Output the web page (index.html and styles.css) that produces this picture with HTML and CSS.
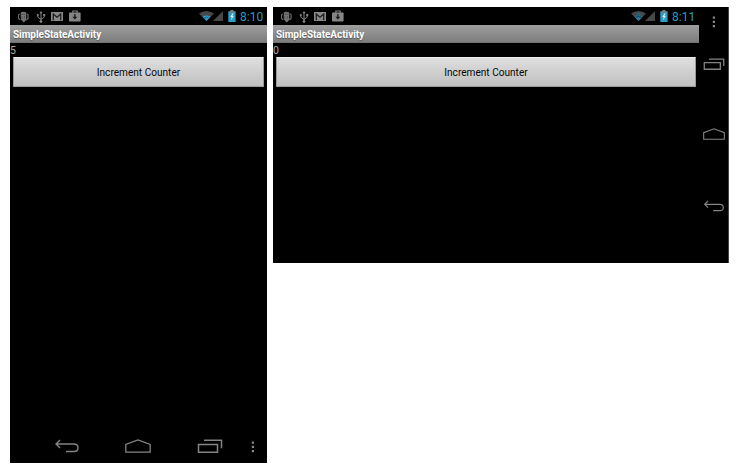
FILE: index.html
```html
<!DOCTYPE html>
<html lang="en">
<head>
<meta charset="utf-8">
<title>SimpleStateActivity</title>
<link rel="stylesheet" href="styles.css">
</head>
<body>
<svg class="defs" width="0" height="0">
  <symbol id="debug" viewBox="0 0 12 12"><path d="M3 1.2Q6-.6 9 1.2V8Q9 9 8 10.4L6.2 12 5 10.6 3.4 9 3 7z" fill="#747474"/><path d="M1.8 2.5L.5 4v3.5l2 1.5M9.5 2.5L11 3.5V7.5L9 9.3" fill="none" stroke="#6c6c6c" stroke-width="1.3"/><path d="M3.5 3h5M4.2 5v3M7 5v3" stroke="#444" stroke-width=".7"/></symbol>
  <symbol id="usb" viewBox="0 0 10 12"><path d="M5 1v10M1.8 4v2.2L5 8.4 8.2 6.2V4" fill="none" stroke="#858585" stroke-width="1"/><path d="M5 0l1.6 2.2H3.4z" fill="#858585"/><circle cx="1.8" cy="4" r="1.1" fill="#858585"/><path d="M7.2 3h2v2h-2z" fill="#858585"/><circle cx="5" cy="10.6" r="1.3" fill="#858585"/></symbol>
  <symbol id="mail" viewBox="0 0 12 9"><path d="M0 0h12v9H0z" fill="#888"/><path d="M2.3 8.2V2L6 5.1 9.7 2v6.2" fill="none" stroke="#181818" stroke-width="1.2"/></symbol>
  <symbol id="bag" viewBox="0 0 12 12"><path d="M3.8 3V1h4.4v2" fill="none" stroke="#858585" stroke-width="1.1"/><rect y="2.5" width="11.6" height="9" rx=".8" fill="#858585"/><path d="M5.2 4h1.3v2.7h1.8L5.85 9.4 3.4 6.7h1.8z" fill="#181818"/></symbol>
  <symbol id="signal" viewBox="0 0 10 10"><path d="M10 0v10H0z" fill="#484848"/></symbol>
  <symbol id="battery" viewBox="0 0 8 12"><path d="M2.4 0h3v1.2h2.2v2H.3v-2h2.1z" fill="#75838a"/><path d="M.3 2.6h7.3V12H.3z" fill="#2e9bc4"/><path d="M4.5 3.4L2.3 7h1.5L3 10.2 5.8 6H4.3l1.2-2.6z" fill="#e8fbff"/></symbol>
  <symbol id="back" viewBox="0 0 26 14"><path d="M6 1L2 5l4 4M2 5h18q4 0 4 3.8T20 12.5h-8" fill="none" stroke="#848484" stroke-width="1.4"/></symbol>
  <symbol id="home" viewBox="0 0 26 14"><path d="M.8 13.2V5.4L13 .9l12.2 4.5v7.8z" fill="none" stroke="#848484" stroke-width="1.3"/></symbol>
  <symbol id="recent" viewBox="0 0 26 14"><path d="M1.5 5.5h19v7.7h-19zM7 1.3h17.5v8" fill="none" stroke="#848484" stroke-width="1.5"/></symbol>
  <symbol id="more" viewBox="0 0 4 12"><path d="M.8.5h2.2v2.2H.8zM.8 4.8h2.2V7H.8zM.8 9h2.2v2.2H.8z" fill="#858585"/></symbol>
</svg>
<main class="screens">
  <section class="phone portrait">
    <div class="app">
      <header class="status">
        <svg class="debug"><use href="#debug"/></svg><svg class="usb"><use href="#usb"/></svg><svg class="mail"><use href="#mail"/></svg><svg class="bag"><use href="#bag"/></svg>
        <svg class="wifi" viewBox="0 0 15 10"><path d="M0 2.5Q7.5-2.5 15 2.5L7.5 10z" fill="#484848"/><path d="M3.5 5.8Q7.5 3.1 11.5 5.8L7.5 10z" fill="#279ccb"/><path d="M4.6 7.3Q7.5 5.1 10.4 7.3" fill="none" stroke="#173b49" stroke-width=".6"/></svg>
        <svg class="signal"><use href="#signal"/></svg><svg class="battery"><use href="#battery"/></svg><time>8:10</time>
      </header>
      <h1>SimpleStateActivity</h1>
      <p>5</p>
      <button>Increment Counter</button>
    </div>
    <nav>
      <svg class="back"><use href="#back"/></svg><svg class="home"><use href="#home"/></svg><svg class="recent"><use href="#recent"/></svg><svg class="more"><use href="#more"/></svg>
    </nav>
  </section>
  <section class="phone landscape">
    <div class="app">
      <header class="status">
        <svg class="debug"><use href="#debug"/></svg><svg class="usb"><use href="#usb"/></svg><svg class="mail"><use href="#mail"/></svg><svg class="bag"><use href="#bag"/></svg>
        <svg class="wifi" viewBox="0 0 15 10"><path d="M0 2.5Q7.5-2.5 15 2.5L7.5 10z" fill="#484848"/><path d="M7.5 1.6L10 4 8.8 5.1 11.7 5.8 7.5 10 3.3 5.8 6.2 5.1 5 4z" fill="#26799a"/><path d="M4.7 6.5Q7.5 4.3 10.3 6.5M6.3 3.8h2.4" fill="none" stroke="#142b34" stroke-width=".8"/></svg>
        <svg class="signal"><use href="#signal"/></svg><svg class="battery"><use href="#battery"/></svg><time>8:11</time>
      </header>
      <h1>SimpleStateActivity</h1>
      <p>0</p>
      <button>Increment Counter</button>
    </div>
    <nav>
      <svg class="more"><use href="#more"/></svg><svg class="recent"><use href="#recent"/></svg><svg class="home"><use href="#home"/></svg><svg class="back"><use href="#back"/></svg>
    </nav>
  </section>
</main>
</body>
</html>
```
FILE: styles.css
```css
* { box-sizing: border-box; }
body { margin: 0; background: #fff; font-family: Roboto, sans-serif; }
svg { display: block; flex: none; }
.defs { position: absolute; }
.screens { display: flex; align-items: flex-start; gap: 6px; padding: 7px 7px 0 10px; }
.phone { display: flex; background: #000; overflow: hidden; }
.portrait { width: 257px; height: 456px; flex-direction: column; justify-content: space-between; }
.landscape { width: 456px; height: 256px; border-right: 1px solid #444; }
.landscape .app { width: 426px; flex: none; }
.status { display: flex; align-items: flex-start; height: 18px; padding: 3px 4px 0 8px; }
.debug { width: 11px; height: 12px; margin: 1px 7px 0 0; }
.usb { width: 10px; height: 12px; margin: 1px 5px 0 0; }
.mail { width: 12px; height: 9px; margin: 2px 6px 0 0; }
.bag { width: 12px; height: 12px; }
.wifi { width: 15px; height: 10px; margin: 1px -1px 0 auto; }
.signal { width: 10px; height: 10px; margin-top: 1px; }
.battery { width: 8px; height: 12px; margin: 0 4px 0 5px; }
time { width: 23px; color: #2b9bc8; font-size: 12px; line-height: 14px; white-space: nowrap; }
h1 { margin: 0; height: 18px; padding: 1px 0 0 3px; color: #fff; background: linear-gradient(#9e9e9e, #7d7d7d); border-bottom: 1px solid #737373; font-size: 10px; line-height: 17px; font-weight: 700; letter-spacing: -.04px; text-shadow: 0 1px 1px #555; }
p { margin: 0; height: 14px; color: #aaa; font-size: 10.5px; line-height: 15px; }
button { display: block; width: calc(100% - 6px); height: 30px; margin: 0 3px; padding: 1px 0 0; border: 1px solid #999; border-top-color: #eee; border-radius: 1px; color: #080808; background: linear-gradient(#dedede, #c0c0c0); font: 10.1px/27px Roboto, sans-serif; }
nav { display: flex; }
.portrait nav { align-items: flex-start; height: 25px; padding: 1px 12px 0 44px; }
.back, .home, .recent { width: 26px; height: 14px; }
.more { width: 4px; height: 12px; }
.portrait .home { margin-left: 45px; }
.portrait .recent { margin: 0 0 0 46px; }
.portrait .back { margin-top: 0; }
.portrait .more { margin: 2px 0 0 28px; }
.landscape nav { flex: 1; flex-direction: column; align-items: center; padding-top: 9px; }
.landscape .recent, .landscape .home, .landscape .back { width: 22px; height: 12px; }
.landscape .recent { margin-top: 30px; }
.landscape .home { margin-top: 58px; }
.landscape .back { margin-top: 60px; }
```
